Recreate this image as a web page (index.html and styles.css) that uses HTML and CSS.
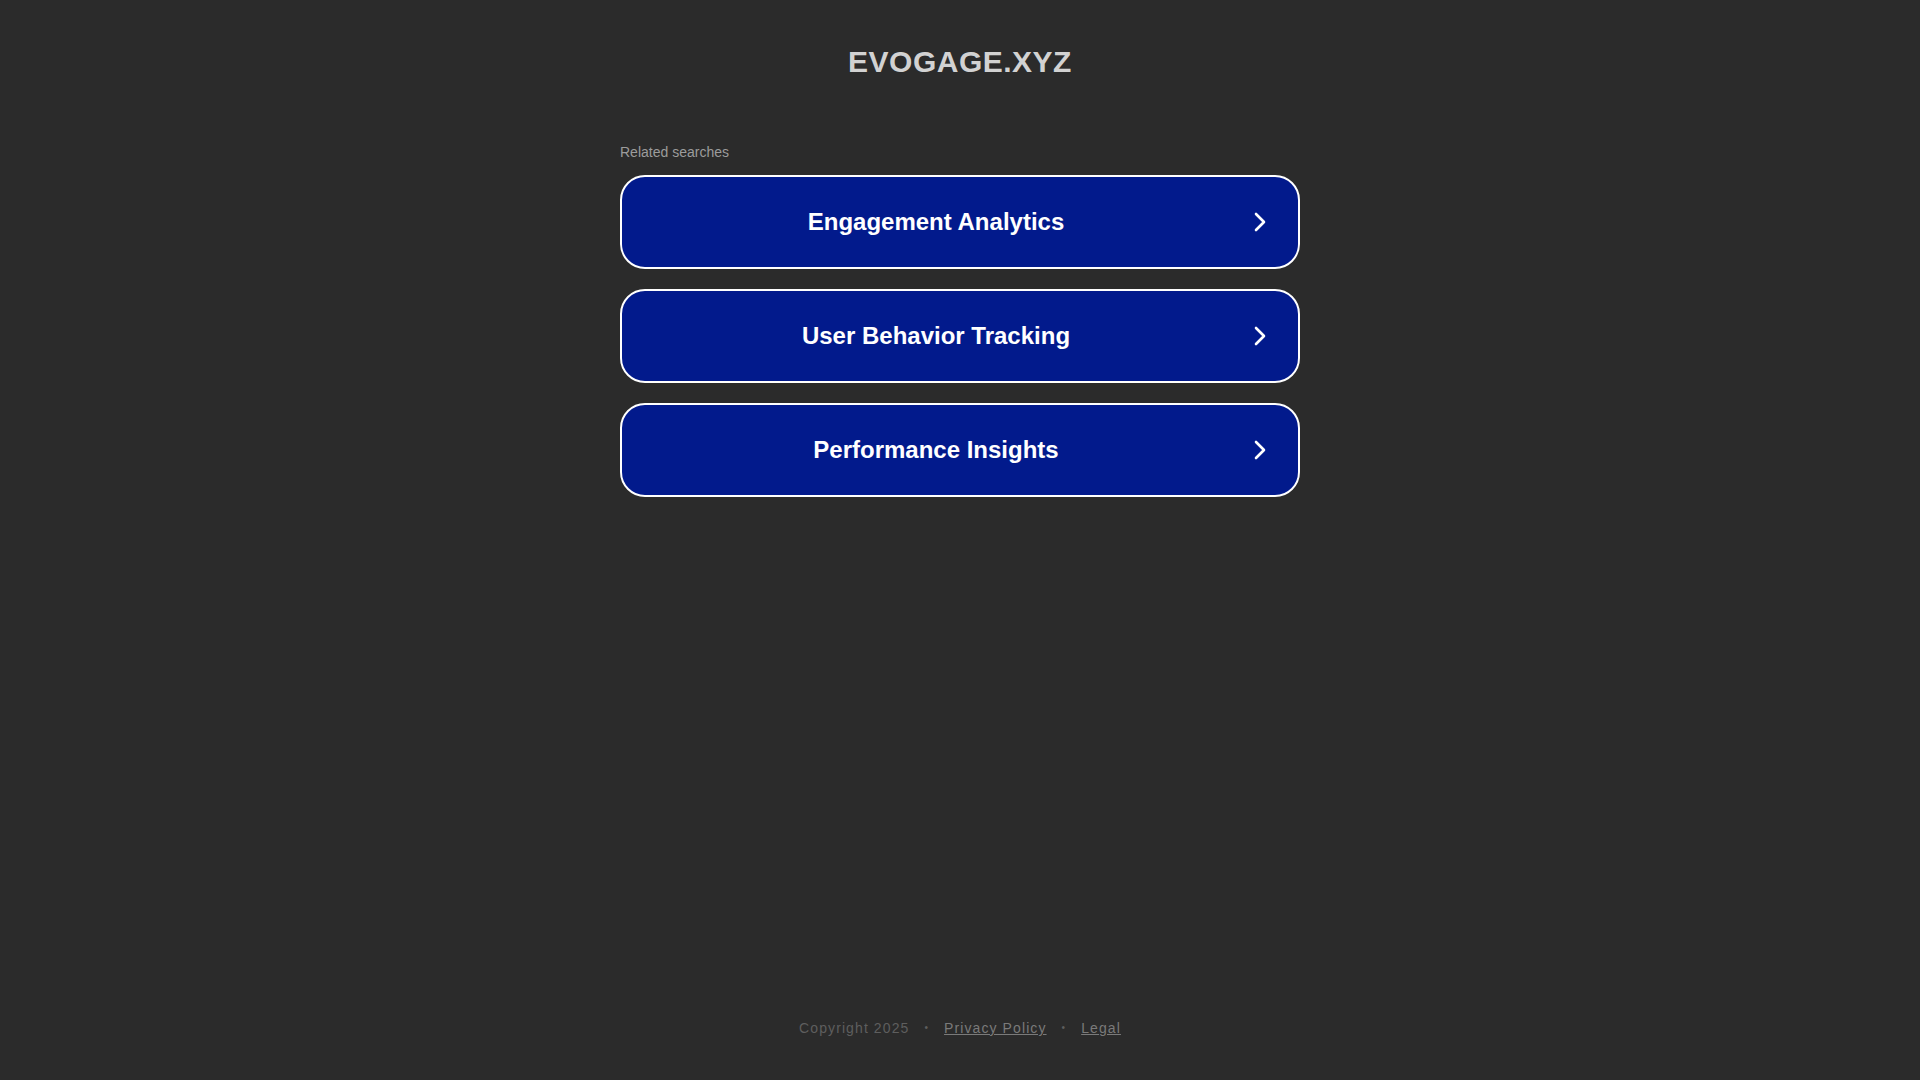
FILE: index.html
```html
<!DOCTYPE html>
<html lang="en">
<head>
<meta charset="utf-8">
<title>evogage.xyz</title>
<link rel="stylesheet" href="styles.css">
</head>
<body>
<div class="page">
  <header class="header">
    <h1 class="domain">EVOGAGE.XYZ</h1>
  </header>
  <main class="content">
    <p class="label">Related searches</p>
    <ul class="links">
      <li><a class="link" href="#"><span class="link-text">Engagement Analytics</span><svg class="chev" viewBox="0 0 12 20" width="12" height="20"><path d="M2 2 L10 10 L2 18"/></svg></a></li>
      <li><a class="link" href="#"><span class="link-text">User Behavior Tracking</span><svg class="chev" viewBox="0 0 12 20" width="12" height="20"><path d="M2 2 L10 10 L2 18"/></svg></a></li>
      <li><a class="link" href="#"><span class="link-text">Performance Insights</span><svg class="chev" viewBox="0 0 12 20" width="12" height="20"><path d="M2 2 L10 10 L2 18"/></svg></a></li>
    </ul>
  </main>
  <footer class="footer">
    <span class="copy">Copyright 2025</span>
    <span class="dot">•</span>
    <a class="flink" href="#">Privacy Policy</a>
    <span class="dot">•</span>
    <a class="flink" href="#">Legal</a>
  </footer>
</div>
</body>
</html>
```

FILE: styles.css
```css
html, body {
  margin: 0;
  padding: 0;
  background: #2b2b2b;
}

body {
  font-family: "Liberation Sans", Arial, sans-serif;
}

.page {
  min-height: 100vh;
  display: flex;
  flex-direction: column;
  align-items: center;
}

.header {
  padding-top: 44px;
}

.domain {
  margin: 0;
  font-size: 30px;
  line-height: 36px;
  font-weight: bold;
  color: #d2d2d2;
  letter-spacing: 0.5px;
  text-align: center;
}

.content {
  width: 680px;
  margin-top: 64px;
}

.label {
  margin: 0 0 15px 0;
  font-size: 14px;
  line-height: 16px;
  color: #9c9c9c;
}

.links {
  list-style: none;
  margin: 0;
  padding: 0;
}

.links li {
  margin-bottom: 20px;
}

.link {
  box-sizing: border-box;
  height: 94px;
  display: flex;
  align-items: center;
  padding: 0 32px 0 20px;
  background: #021a8c;
  border: 2px solid #ffffff;
  border-radius: 25px;
  text-decoration: none;
}

.link-text {
  flex: 1;
  text-align: center;
  color: #ffffff;
  font-size: 24px;
  font-weight: bold;
  line-height: 28px;
}

.chev {
  margin-left: 24px;
  flex: none;
}

.chev path {
  fill: none;
  stroke: #ffffff;
  stroke-width: 2.6;
  stroke-linecap: round;
  stroke-linejoin: round;
}

.footer {
  margin-top: auto;
  padding-bottom: 44px;
  display: flex;
  align-items: center;
  gap: 15px;
  font-size: 14px;
  line-height: 16px;
  letter-spacing: 1.1px;
}

.copy {
  color: #5e5e5e;
}

.dot {
  color: #5e5e5e;
  font-size: 10px;
}

.flink {
  color: #7a7a7a;
  text-decoration: underline;
}
```
